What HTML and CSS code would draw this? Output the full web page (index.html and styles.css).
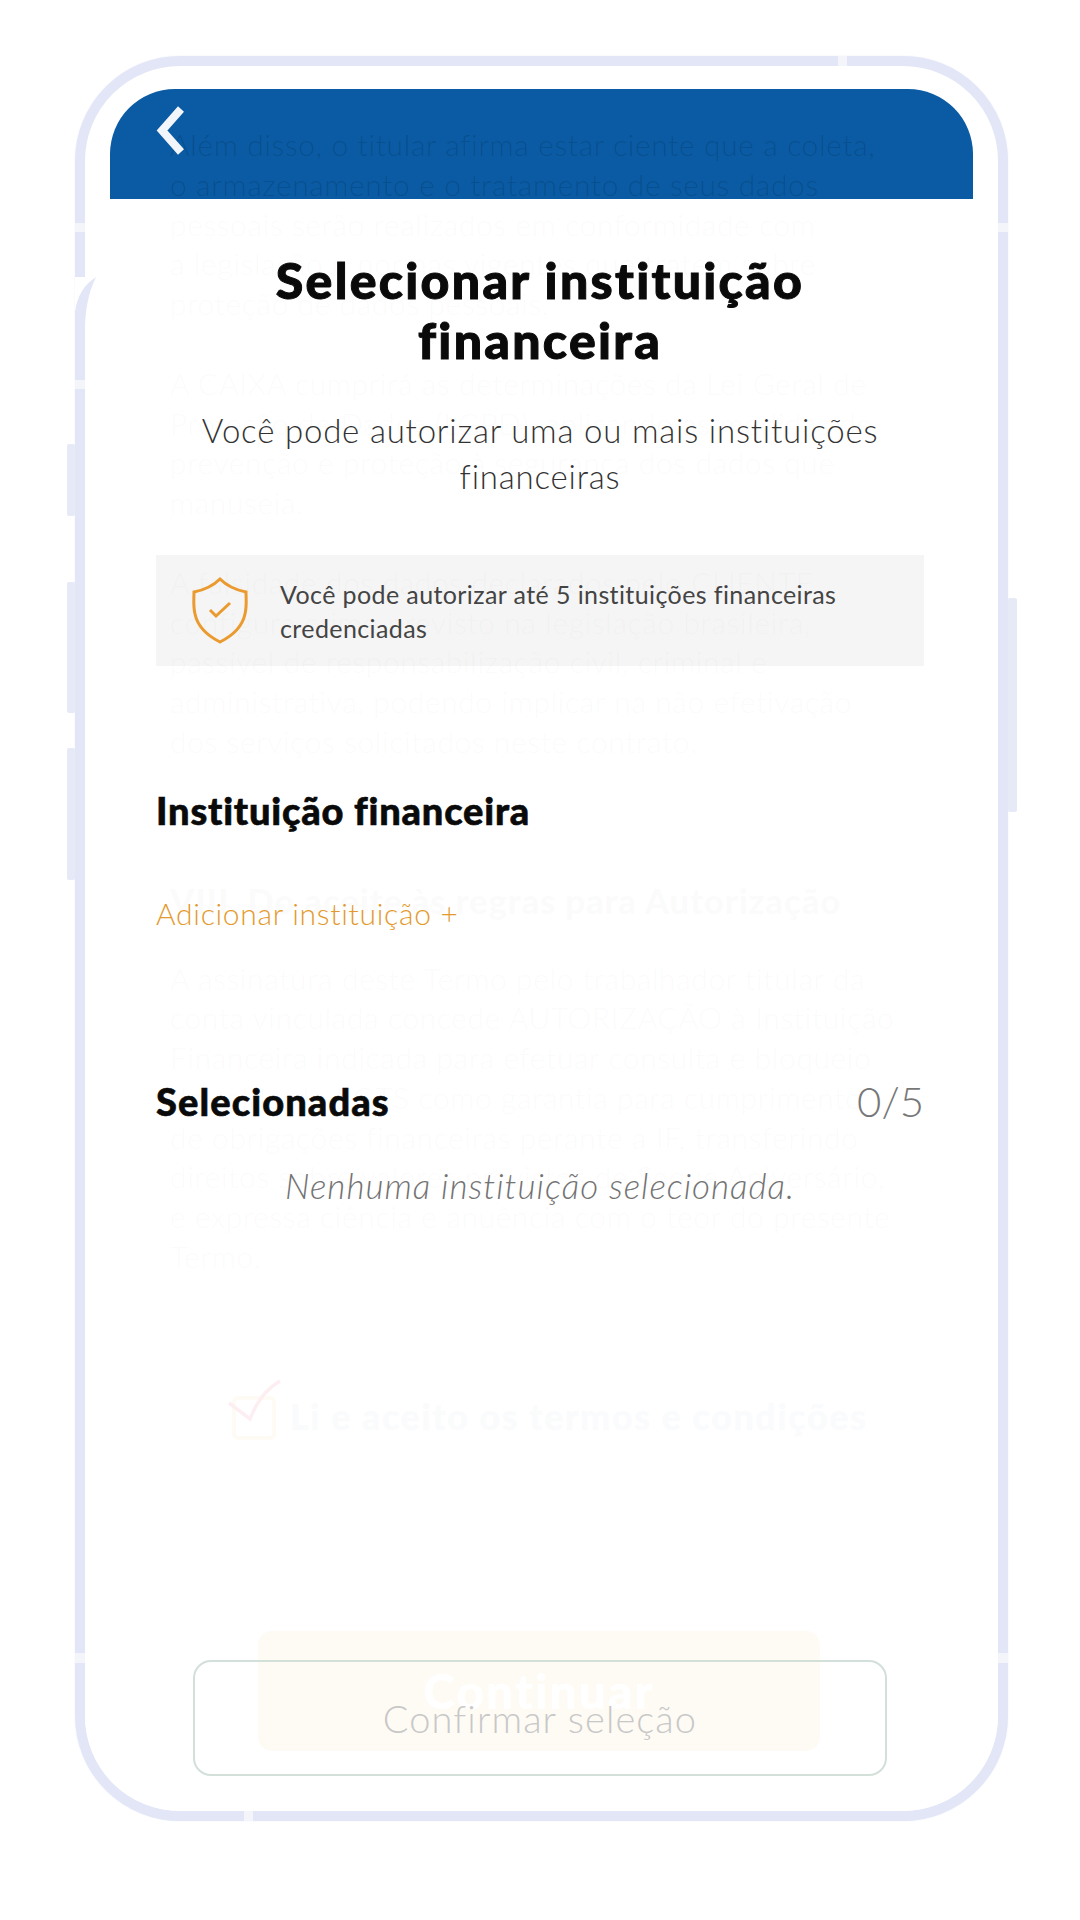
FILE: index.html
```html
<!DOCTYPE html>
<html lang="pt-BR">
<head>
<meta charset="utf-8">
<title>Selecionar instituição financeira</title>
<link rel="stylesheet" href="styles.css">
</head>
<body>
<div class="phone">
  <i class="side side-a"></i><i class="side side-b"></i><i class="side side-c"></i><i class="side side-r"></i>
  <i class="gap gap-top"></i><i class="gap gap-l1"></i><i class="gap gap-l2"></i><i class="gap gap-r1"></i>
  <i class="gap gap-l3"></i><i class="gap gap-r3"></i><i class="gap gap-bot"></i>
  <svg class="seam" viewBox="0 0 32 60" width="32" height="60" aria-hidden="true">
    <rect x="0" y="0" width="21" height="36" fill="#fff"/>
    <path d="M21 0C9 8 2 19 0 35V53H10C10 35 13 16 21 0Z" fill="#e2e6f6"/>
  </svg>
  <div class="blue"></div>
  <div class="under">
    <p class="para">
      <span class="line">Além disso, o titular afirma estar ciente que a coleta,</span>
      <span class="line">o armazenamento e o tratamento de seus dados</span>
      <span class="line">pessoais serão realizados em conformidade com</span>
      <span class="line">a legislação e normas vigentes que tratem sobre</span>
      <span class="line">proteção de dados pessoais.</span>
    </p>
    <p class="para">
      <span class="line">A CAIXA cumprirá as determinações da Lei Geral de</span>
      <span class="line">Proteção de Dados (LGPD), aplicando as medidas de</span>
      <span class="line">prevenção e proteção à segurança dos dados que</span>
      <span class="line">manuseia.</span>
    </p>
    <p class="para para-long">
      <span class="line">A falsidade dos dados declarados pelo CLIENTE</span>
      <span class="line">configura crime previsto na legislação brasileira,</span>
      <span class="line">passível de responsabilização civil, criminal e</span>
      <span class="line">administrativa, podendo implicar na não efetivação</span>
      <span class="line">dos serviços solicitados neste contrato.</span>
    </p>
    <h3 class="under-head">VIII. Do aceite às regras para Autorização</h3>
    <p class="para">
      <span class="line">A assinatura deste Termo pelo trabalhador titular da</span>
      <span class="line">conta vinculada concede AUTORIZAÇÃO à Instituição</span>
      <span class="line">Financeira indicada para efetuar consulta e bloqueio</span>
      <span class="line">do saldo do FGTS como garantia para cumprimento</span>
      <span class="line">de obrigações financeiras perante a IF, transferindo</span>
      <span class="line">direitos sobre valores previstos de Saque Aniversário,</span>
      <span class="line">e expressa ciência e anuência com o teor do presente</span>
      <span class="line">Termo.</span>
    </p>
    <div class="accept">
      <svg class="tick" viewBox="0 0 54 62" width="54" height="62" aria-hidden="true">
        <rect x="6" y="19" width="40" height="40" rx="4" fill="none" stroke="#f7e0b2" stroke-width="4"/>
        <path d="M1 24L22 40C28 24 38 10 52 2" fill="none" stroke="#f07c9b" stroke-width="3.5"/>
      </svg>
      <span class="accept-text">Li e aceito os termos e condições</span>
    </div>
    <div class="continue">Continuar</div>
  </div>
  <div class="veil"></div>
  <div class="sheet">
    <svg class="back" viewBox="0 0 40 60" width="40" height="60" aria-hidden="true">
      <path d="M31 9L12 30.5L31 52" fill="none" stroke="#f2f5f9" stroke-width="8"/>
    </svg>
    <h1 class="title">Selecionar instituição<br>financeira</h1>
    <p class="sub">Você pode autorizar uma ou mais instituições<br>financeiras</p>
    <div class="notice">
      <svg class="shield" viewBox="0 0 60 70" width="60" height="70" aria-hidden="true">
        <path d="M30 3C36 9 46 14 56 16C56 22 57 30 55 38C52 52 40 61 30 66C20 61 8 52 5 38C3 30 4 22 4 16C14 14 24 9 30 3Z" fill="none" stroke="#ea9a2e" stroke-width="3"/>
        <path d="M20 34L26 40L40 27" fill="none" stroke="#ea9a2e" stroke-width="3"/>
      </svg>
      <p class="notice-text">Você pode autorizar até 5 instituições financeiras<br>credenciadas</p>
    </div>
    <h2 class="section">Instituição financeira</h2>
    <a class="add">Adicionar instituição +</a>
    <div class="row">
      <h2 class="section section-sel">Selecionadas</h2>
      <span class="count">0/5</span>
    </div>
    <p class="empty">Nenhuma instituição selecionada.</p>
    <div class="confirm">Confirmar seleção</div>
  </div>
</div>
</body>
</html>
```
FILE: styles.css
```css
* { box-sizing: border-box; }
html, body { margin: 0; height: 1920px; background: #fff; }
body { padding: 56px 0 0 75px; font-family: Lato, "Open Sans", sans-serif; }
h1, h2, h3, p { margin: 0; font-weight: inherit; }
.phone { position: relative; width: 933px; height: 1765px; border: 10px solid #e2e6f6; border-radius: 105px; background: #fff; box-shadow: 0 0 2px #eef0fa; }
.side { position: absolute; display: block; background: #e6e9f6; border-radius: 2px; }
.side-a { left: -18px; top: 378px; width: 8px; height: 72px; }
.side-b { left: -18px; top: 516px; width: 8px; height: 131px; }
.side-c { left: -18px; top: 682px; width: 8px; height: 132px; }
.side-r { right: -19px; top: 532px; width: 9px; height: 214px; }
.gap { position: absolute; display: block; background: #f4f5fb; z-index: 1; }
.gap-top { left: 753px; top: -10px; width: 9px; height: 10px; }
.gap-l1 { left: -10px; top: 157px; width: 10px; height: 9px; }
.gap-l2 { left: -10px; top: 314px; width: 10px; height: 9px; }
.gap-r1 { right: -10px; top: 157px; width: 10px; height: 9px; }
.gap-l3 { left: -10px; top: 1587px; width: 10px; height: 10px; }
.gap-r3 { right: -10px; top: 1587px; width: 10px; height: 10px; }
.gap-bot { left: 159px; bottom: -10px; width: 9px; height: 10px; }
.seam { position: absolute; left: -10px; top: 211px; z-index: 1; }

.blue { position: absolute; left: 25px; right: 25px; top: 23px; height: 110px; background: #0a5ba4; border-radius: 65px 65px 0 0; }
.under { position: relative; padding: 59px 0 0 85px; color: rgba(0, 0, 0, .14); font-size: 30px; font-weight: 300; line-height: 39.75px; letter-spacing: .6px; }
.para { margin-bottom: 40px; }
.para-long { margin-bottom: 118px; }
.line { display: block; white-space: nowrap; }
.under-head { font-size: 35px; font-weight: 900; line-height: 40px; margin-bottom: 39px; letter-spacing: .7px; }
.accept { display: flex; align-items: flex-end; gap: 8px; margin: 102px 0 0 58px; }
.tick { display: block; }
.accept-text { font-size: 36px; font-weight: 900; letter-spacing: 1.5px; line-height: 50px; color: #d9e0e8; -webkit-text-stroke: .6px #d9e0e8; }
.continue { display: flex; align-items: center; justify-content: center; margin: 190px 0 0 88px; width: 562px; height: 120px; background: #f7e0b2; border-radius: 14px; color: #fff; font-size: 48px; font-weight: 900; letter-spacing: 2px; }
.veil { position: absolute; left: 0; right: 0; top: 133px; bottom: 0; background: rgba(255, 255, 255, .87); border-radius: 0 0 95px 95px; }

.sheet { position: absolute; inset: 0; display: flex; flex-direction: column; padding: 0 74px 35px 71px; }
.back { display: block; flex: none; margin: 34px 0 0 -6px; }
.title { margin-top: 90px; text-align: center; color: #0a0a0a; font-size: 50px; font-weight: 900; line-height: 60px; letter-spacing: 2.3px; -webkit-text-stroke: 1px #0a0a0a; }
.sub { margin-top: 37px; text-align: center; color: #333; font-size: 33px; font-weight: 300; line-height: 46px; letter-spacing: .8px; }
.notice { display: flex; align-items: center; gap: 30px; margin-top: 56px; height: 111px; padding-left: 34px; background: rgba(0, 0, 0, .04); }
.shield { display: block; flex: none; }
.notice-text { color: #444; font-size: 25px; line-height: 34px; letter-spacing: .4px; white-space: nowrap; }
.section { color: #0a0a0a; font-size: 38px; font-weight: 900; line-height: 50px; letter-spacing: .8px; margin-top: 119px; -webkit-text-stroke: .6px #0a0a0a; }
.section-sel { margin-top: 0; letter-spacing: 1.1px; }
.add { display: block; margin-top: 58px; color: #e39a2c; font-size: 30px; font-weight: 300; line-height: 40px; letter-spacing: .7px; }
.row { display: flex; justify-content: space-between; align-items: center; margin-top: 143px; }
.count { color: #777; font-size: 42px; font-weight: 300; line-height: 50px; }
.empty { margin-top: 37px; text-align: center; color: #737373; font-size: 35px; font-weight: 300; font-style: italic; line-height: 44px; letter-spacing: 1px; }
.confirm { display: flex; align-items: center; justify-content: center; flex: none; margin: auto 0 0 37px; width: 694px; height: 116px; border: 2px solid #d3e0da; border-radius: 18px; color: #c8c8c8; font-size: 38px; font-weight: 300; letter-spacing: 1.1px; }
```
